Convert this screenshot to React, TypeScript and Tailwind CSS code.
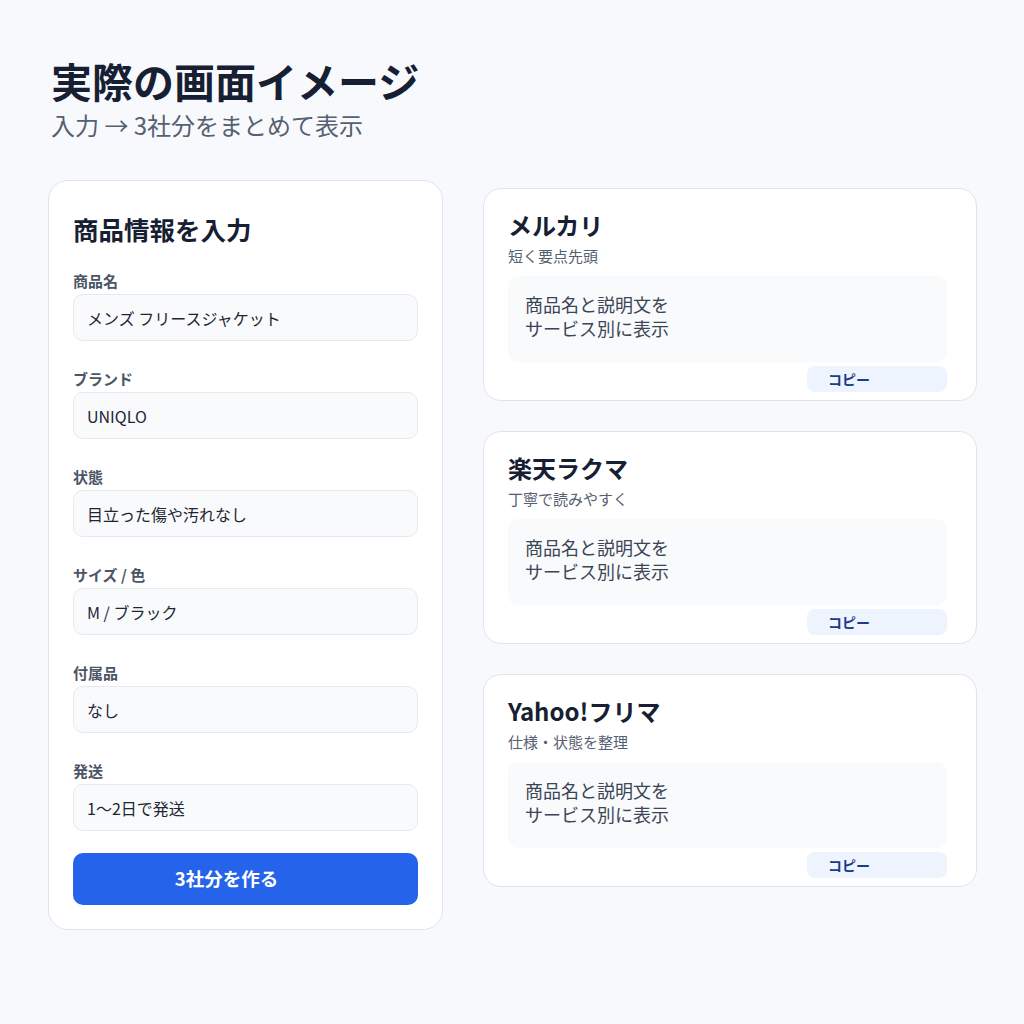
import React from "react";

const font = { fontFamily: '"Noto Sans CJK JP", "Noto Sans", sans-serif' };

const fields = [
  { label: "商品名", value: "メンズ フリースジャケット" },
  { label: "ブランド", value: "UNIQLO" },
  { label: "状態", value: "目立った傷や汚れなし" },
  { label: "サイズ / 色", value: "M / ブラック" },
  { label: "付属品", value: "なし" },
  { label: "発送", value: "1〜2日で発送" },
];

const services = [
  { name: "メルカリ", note: "短く要点先頭" },
  { name: "楽天ラクマ", note: "丁寧で読みやすく" },
  { name: "Yahoo!フリマ", note: "仕様・状態を整理" },
];

export default function App() {
  return (
    <div className="w-[1024px] h-[1024px] bg-[#f7f9fc] pl-[48px] pr-[47px] pt-[56px]" style={font}>
      <div className="ml-[3px]">
        <h1 className="text-[41px] leading-[48px] font-bold text-[#172033]">実際の画面イメージ</h1>
        <p className="mt-[5px] text-[24px] leading-[32px] text-[#556070]">入力 → 3社分をまとめて表示</p>
      </div>
      <div className="mt-[39px] flex gap-[40px] items-start">
        <div className="w-[395px] bg-white border border-[#dfe4ec] rounded-[20px] px-6 pt-8 pb-[24px]">
          <h2 className="text-[25.5px] leading-[32px] font-bold text-[#172033]">商品情報を入力</h2>
          <div className="mt-[26px] flex flex-col gap-[28px]">
            {fields.map((f) => (
              <div key={f.label}>
                <div className="text-[15px] leading-[20px] font-bold text-[#4a5565]">{f.label}</div>
                <div className="mt-[3px] h-[47px] rounded-[10px] bg-[#f8fafc] border border-[#e5e9f0] flex items-center pl-[13px] text-[16px] text-[#1f2533]">
                  {f.value}
                </div>
              </div>
            ))}
          </div>
          <button className="mt-[22px] w-full h-[52px] rounded-[10px] bg-[#2563eb] text-white text-[18.5px] font-bold pr-[38px]">
            3社分を作る
          </button>
        </div>
        <div className="mt-[8px] flex-1 flex flex-col gap-[30px]">
          {services.map((s) => (
            <div key={s.name} className="bg-white border border-[#dfe4ec] rounded-[18px] pl-6 pr-[29px] pt-[20px] pb-[8px]">
              <div className="text-[24px] leading-[32px] font-bold text-[#172033]">{s.name}</div>
              <div className="mt-[5px] text-[15px] leading-[20px] text-[#556070]">{s.note}</div>
              <div className="mt-[10px] h-[86px] rounded-[10px] bg-[#f8fafc] pl-[17px] pt-[16px] text-[18px] leading-[24px] text-[#3b4555]">
                商品名と説明文を
                <br />
                サービス別に表示
              </div>
              <div className="mt-[4px] flex justify-end">
                <div className="w-[140px] h-[26px] rounded-[8px] bg-[#eef4fe] pl-[21px] flex items-center text-[14px] font-bold text-[#1e3a8a]">
                  コピー
                </div>
              </div>
            </div>
          ))}
        </div>
      </div>
    </div>
  );
}
